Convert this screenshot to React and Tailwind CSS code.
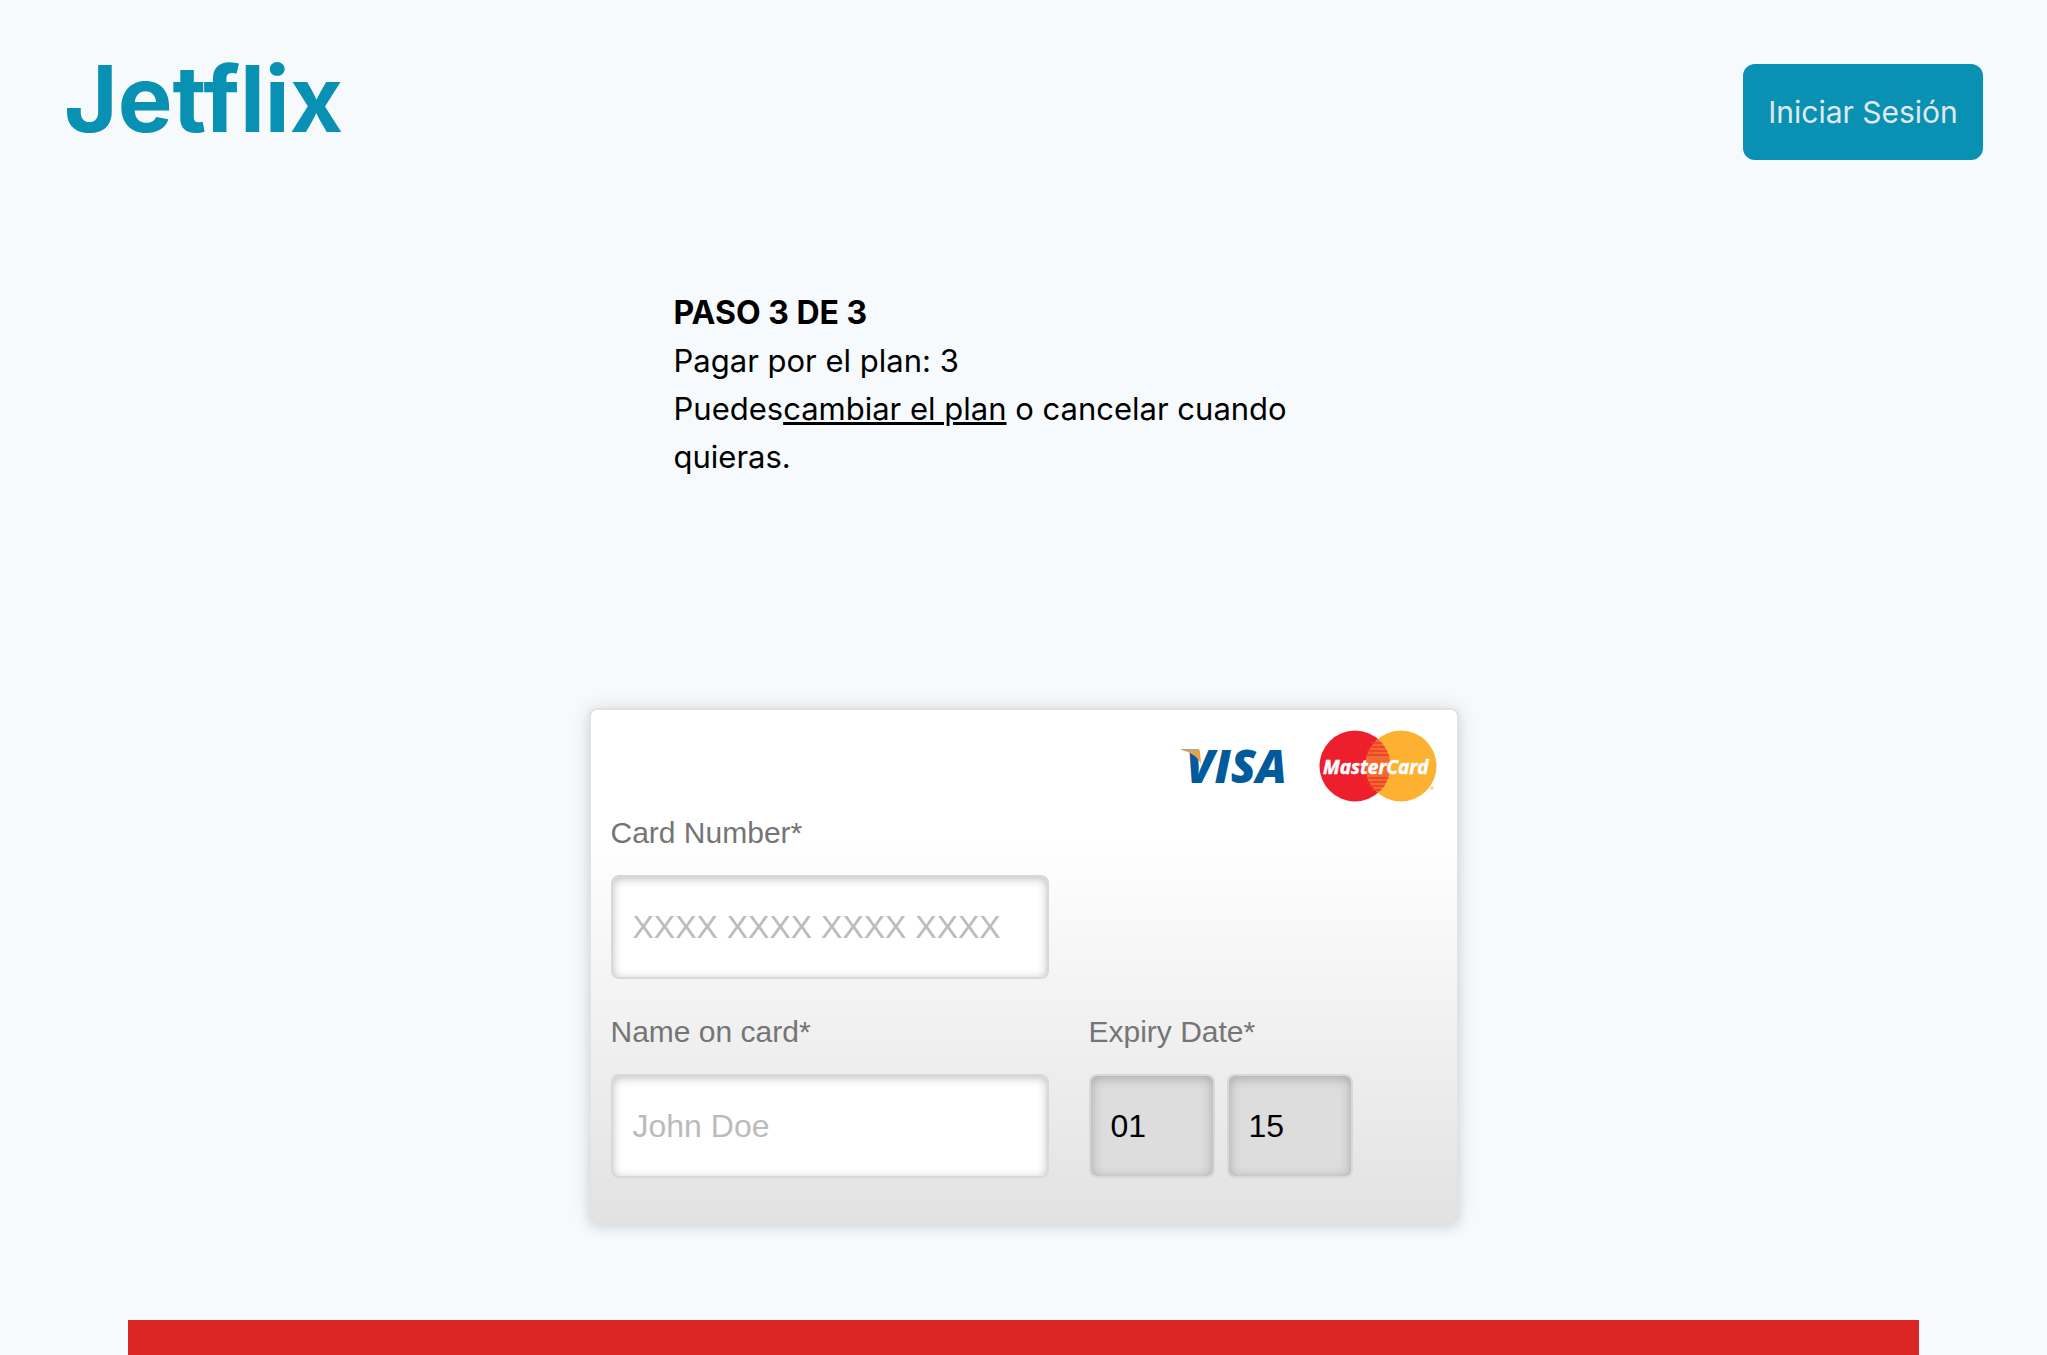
import React from "react";

const fieldBase =
  "h-26 appearance-none rounded-lg border-2 border-[#d8d8d8] px-5 font-['Liberation_Sans',sans-serif] text-[32px] leading-9 text-black outline-none";
const textField =
  fieldBase +
  " w-full bg-white shadow-[inset_0_2px_10px_rgba(0,0,0,0.25)] placeholder:text-[#bbbbbb] placeholder:opacity-100";
const selectField =
  fieldBase +
  " w-[126px] bg-[#dddddd] shadow-[inset_0_2px_12px_rgba(0,0,0,0.25)]";
const labelText = "block text-[30px] leading-12 text-[#757575]";

function VisaLogo() {
  return (
    <svg className="h-[72px] w-[104px] overflow-visible" viewBox="0 0 104 72" role="img" aria-label="Visa">
      <text
        x="5"
        y="53"
        fontFamily="'Open Sans', sans-serif"
        fontWeight="800"
        fontStyle="italic"
        fontSize="46"
        fill="#005a9c"
      >
        VISA
      </text>
      <path d="M0 19H17C18 19 19 20 19 22L20 34C17 27 10 22 0 20Z" fill="#e9a24a" />
      <path d="M0 19H17L18 21H5Z" fill="#b5a88c" />
    </svg>
  );
}

function MasterCardLogo() {
  return (
    <svg className="h-[72px] w-[118px]" viewBox="0 0 118 72" role="img" aria-label="MasterCard">
      <circle cx="36" cy="36" r="35.5" fill="#ed1f2d" />
      <circle cx="82" cy="36" r="35.5" fill="#fcb131" />
      <clipPath id="mc-overlap">
        <circle cx="36" cy="36" r="35.5" />
      </clipPath>
      <g clipPath="url(#mc-overlap)">
        <circle cx="82" cy="36" r="35.5" fill="#f26a2e" />
        <path
          d="M52 13H66M50 17H68M48 21H70M47 25H71M47 48H71M48 52H70M50 56H68M53 60H66"
          stroke="#ee3a2d"
          strokeWidth="1.5"
        />
      </g>
      <text
        x="4"
        y="44"
        fontFamily="'Open Sans', sans-serif"
        fontWeight="700"
        fontStyle="italic"
        fontSize="19"
        fill="#ffffff"
        stroke="#ffffff"
        strokeWidth="0.5"
      >
        MasterCard
      </text>
      <circle cx="113" cy="58" r="1.5" fill="#fcc566" />
    </svg>
  );
}

export default function App() {
  return (
    <div className="flex min-h-screen flex-col bg-[#f7fafd] font-[Inter,sans-serif] text-black">
      <header className="flex items-start justify-between px-16 pt-12">
        <h1 className="text-[92px] leading-[102px] font-bold text-[#0891b2]">Jetflix</h1>
        <button
          type="button"
          className="mt-4 h-24 w-60 rounded-xl bg-[#0891b2] text-[30px] leading-12 text-slate-200"
        >
          Iniciar Sesión
        </button>
      </header>

      <main className="flex flex-1 flex-col items-center">
        <section className="mt-[129px] w-[700px] text-[31px] leading-12">
          <p className="text-[32px] leading-12 font-bold">PASO 3 DE 3</p>
          <p>Pagar por el plan: 3</p>
          <p>
            Puedes
            <a href="#plan" className="underline">
              cambiar el plan
            </a>{" "}
            o cancelar cuando quieras.
          </p>
        </section>

        <form className="mt-[227px] w-[870px] rounded-lg border-2 border-[#e2e2e2] bg-linear-to-b from-white from-25% to-[#e2e2e2] px-5 pt-5 pb-11 font-['Liberation_Sans',sans-serif] shadow-[0_0_20px_rgba(0,0,0,0.1),0_4px_12px_rgba(0,0,0,0.08)]">
          <div className="flex justify-end gap-[34px]">
            <VisaLogo />
            <MasterCardLogo />
          </div>
          <div className="mt-[7px] grid grid-cols-[438px_1fr] gap-x-10 gap-y-[29px]">
            <div>
              <label htmlFor="card-number" className={labelText}>
                Card Number*
              </label>
              <input
                id="card-number"
                type="text"
                placeholder="XXXX XXXX XXXX XXXX"
                className={textField + " mt-[18px] block"}
              />
            </div>
            <div className="col-start-1">
              <label htmlFor="card-name" className={labelText}>
                Name on card*
              </label>
              <input
                id="card-name"
                type="text"
                placeholder="John Doe"
                className={textField + " mt-[18px] block"}
              />
            </div>
            <div>
              <label htmlFor="expiry-month" className={labelText}>
                Expiry Date*
              </label>
              <div className="mt-[18px] flex gap-3">
                <select id="expiry-month" defaultValue="01" className={selectField}>
                  <option>01</option>
                  <option>02</option>
                  <option>03</option>
                </select>
                <select aria-label="Expiry year" defaultValue="15" className={selectField}>
                  <option>15</option>
                  <option>16</option>
                  <option>17</option>
                </select>
              </div>
            </div>
          </div>
        </form>

        <div className="mt-24 flex w-full flex-1 px-32">
          <div className="flex-1 bg-[#dc2626]" />
        </div>
      </main>
    </div>
  );
}
